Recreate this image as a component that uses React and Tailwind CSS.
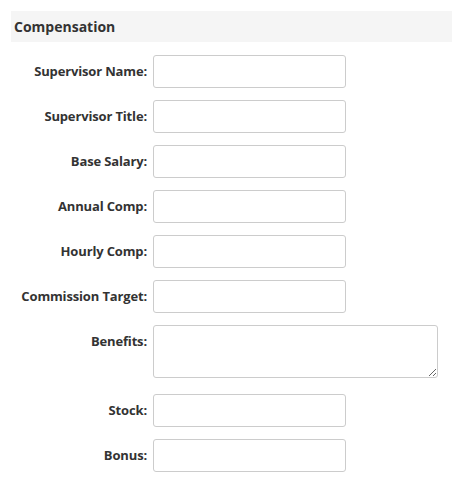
import React from 'react';

const fields = [
    { label: 'Supervisor Name:' },
    { label: 'Supervisor Title:' },
    { label: 'Base Salary:' },
    { label: 'Annual Comp:' },
    { label: 'Hourly Comp:' },
    { label: 'Commission Target:' },
    { label: 'Benefits:', multiline: true },
    { label: 'Stock:' },
    { label: 'Bonus:' },
];

export default function App() {
    return (
        <div className="min-h-[481px] bg-white pt-[11px] pl-[11px] text-[#333] font-['Open_Sans',sans-serif]">
            <div className="h-[31px] bg-[#f5f5f5] pl-[3px] flex items-center text-[14px] font-bold">
                Compensation
            </div>
            <div className="mt-[13px] flex flex-col">
                {fields.map((f) => (
                    <div
                        key={f.label}
                        className={`flex items-start ${f.multiline ? 'mb-[16px]' : 'mb-[12px]'}`}
                    >
                        <label className="w-[142px] shrink-0 text-right text-[13px] font-bold leading-[33px] pr-[6px] tracking-[-0.15px]">
                            {f.label}
                        </label>
                        {f.multiline ? (
                            <textarea className="w-[285px] h-[53px] border border-[#ccc] rounded-[3px] bg-white resize-y block" />
                        ) : (
                            <input
                                type="text"
                                className="w-[193px] h-[33px] border border-[#ccc] rounded-[3px] bg-white block"
                            />
                        )}
                    </div>
                ))}
            </div>
        </div>
    );
}
